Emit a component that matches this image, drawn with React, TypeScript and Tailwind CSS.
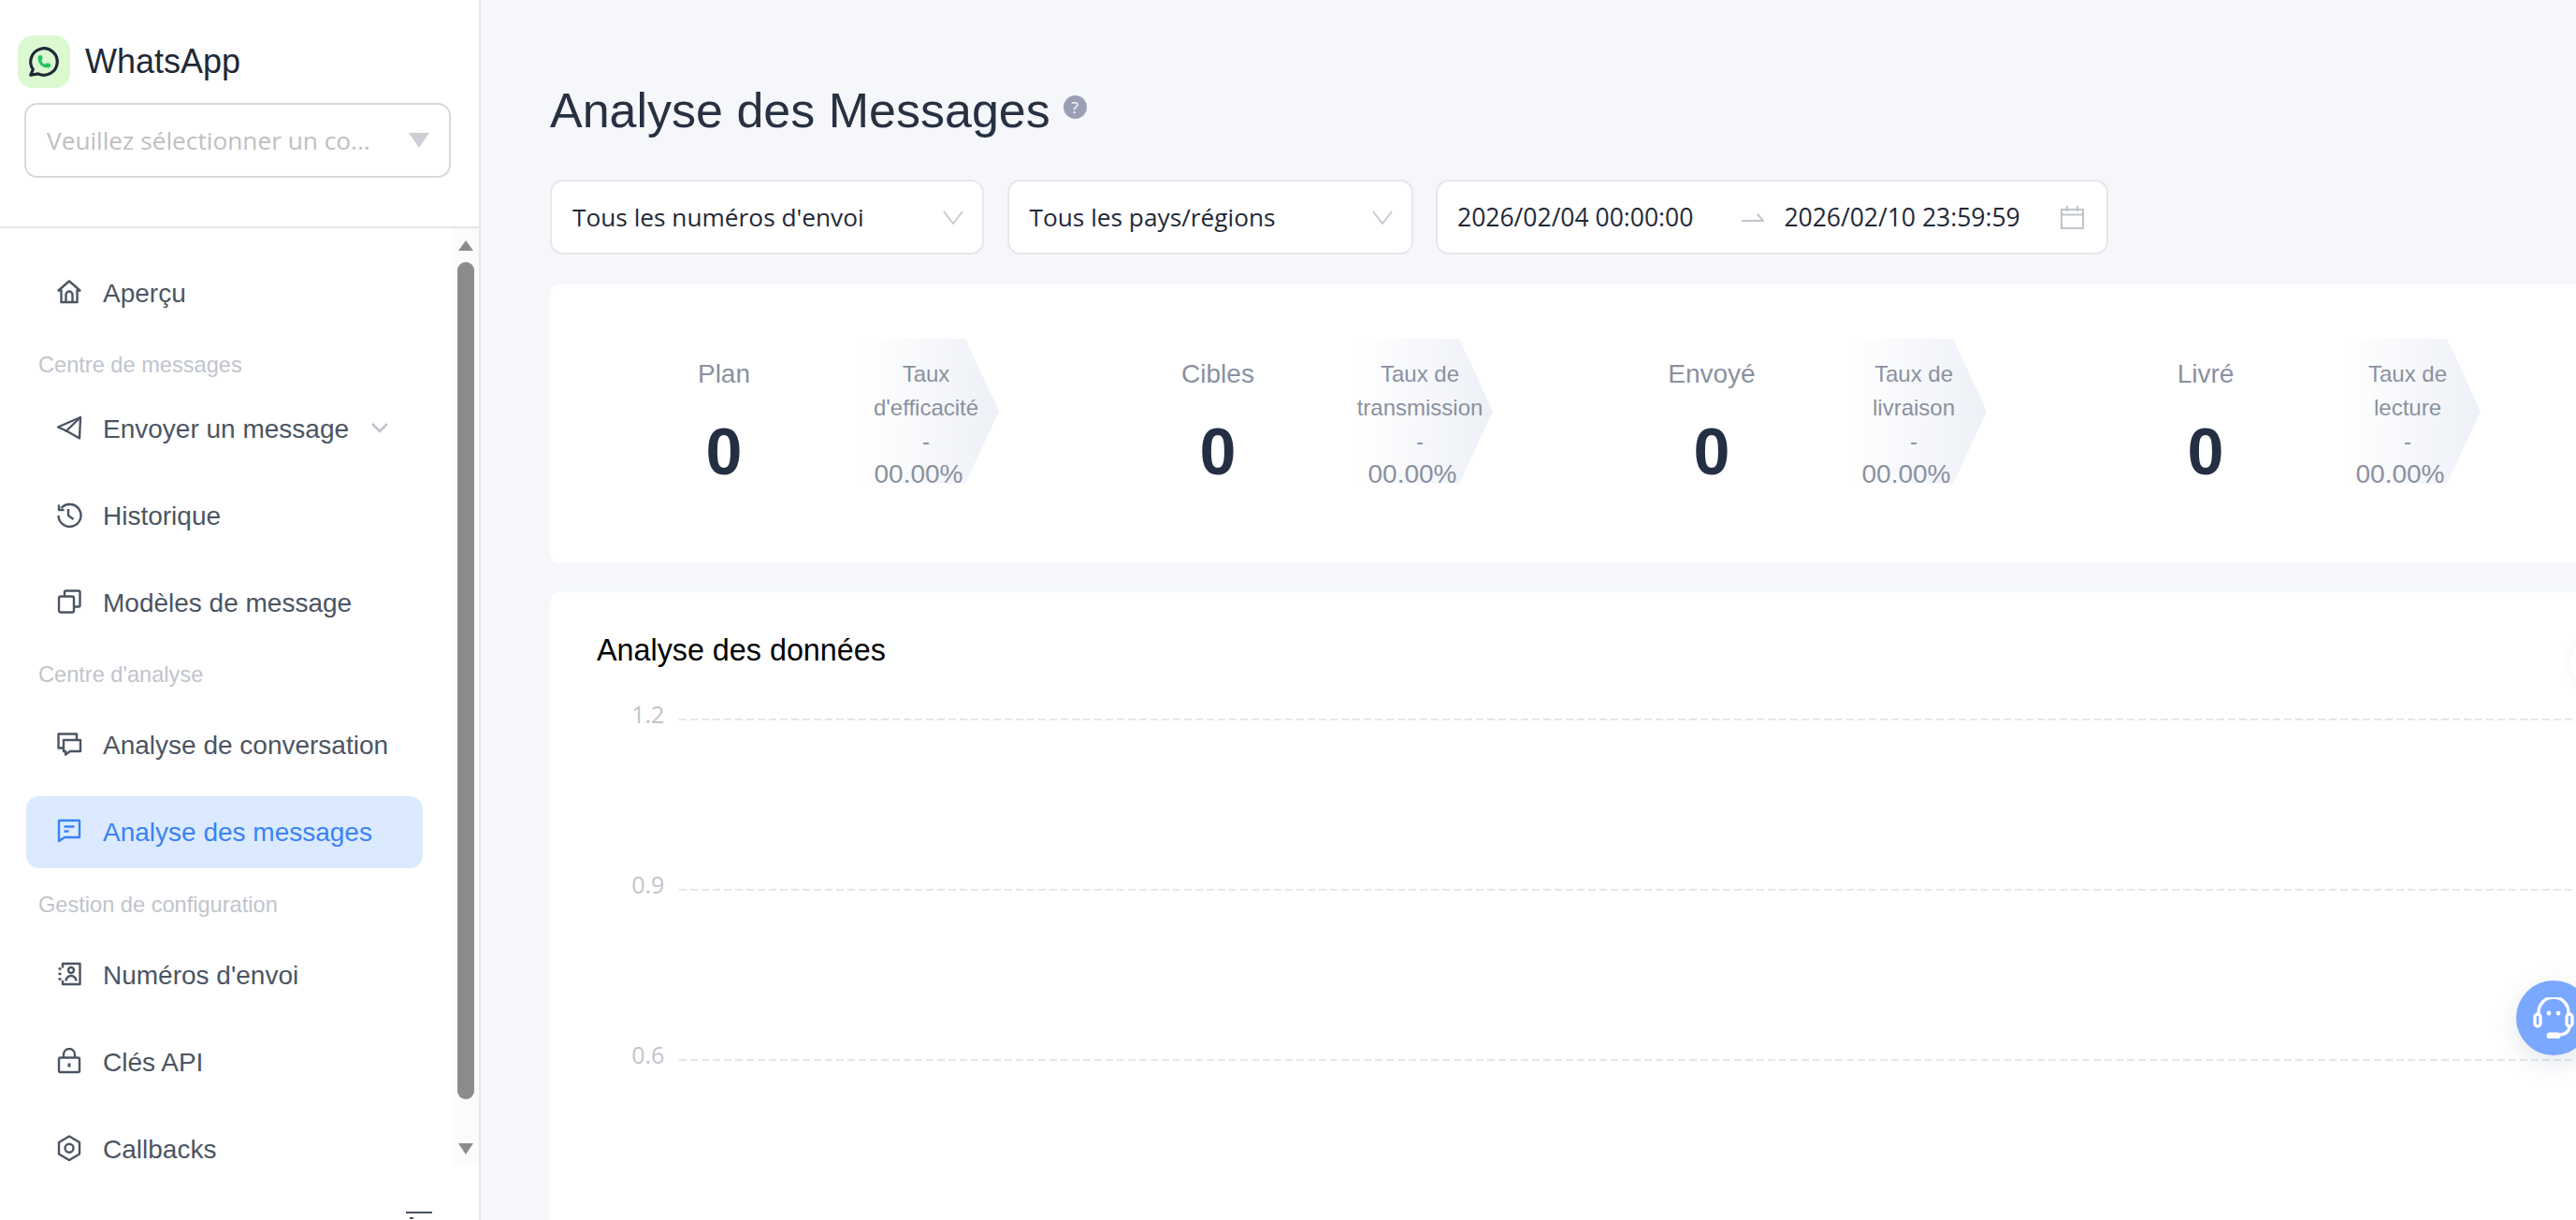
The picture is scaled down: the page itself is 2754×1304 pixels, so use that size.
import React from "react";

const sans = "font-['Liberation_Sans',Arial,sans-serif]";
const ui = "font-['Open_Sans','Noto_Sans',sans-serif]";

const icons: Record<string, React.ReactNode> = {
  home: (
    <>
      <path d="M14 2.5 2.5 12.5H5.5V25H22.5V12.5H25.5Z" />
      <path d="M10.5 25V17a3.5 3.5 0 0 1 7 0V25" />
    </>
  ),
  send: (
    <>
      <path d="M26 3 2 13.5l9 4L25 25.5Z" />
      <path d="M26 3 11 17.5V19" />
    </>
  ),
  history: (
    <>
      <path d="M5.5 7A12 12 0 1 1 2.5 15" />
      <path d="M3 3.5V9H8.5" />
      <path d="M13 8v7l5.5 4" />
    </>
  ),
  copy: (
    <>
      <rect x="3" y="8.5" width="16" height="17" rx="2" />
      <path d="M9 8.5V4a1.5 1.5 0 0 1 1.5-1.5H24A1.5 1.5 0 0 1 25.5 4V18a1.5 1.5 0 0 1-1.5 1.5H19" />
    </>
  ),
  chats: (
    <>
      <path d="M7.5 18.5H2.5V3.5H22V9.5" />
      <path d="M8 10h18v12H15l-5 3.5V22H8Z" />
    </>
  ),
  message: (
    <>
      <path d="M3 3h22v18H9l-6 4Z" />
      <path d="M8.5 9.5h11M8.5 14.5h5" />
    </>
  ),
  book: (
    <>
      <path d="M7 7.5V3h18.5v22H7v-4" />
      <path d="M2.5 8.5h3M2.5 14h3M2.5 19.5h3" />
      <circle cx="16" cy="10" r="3" />
      <path d="M10.5 21.5a5.5 5.5 0 0 1 11 0" />
    </>
  ),
  lock: (
    <>
      <rect x="3" y="10.5" width="22" height="15.5" rx="1.5" />
      <path d="M8 10.5V7a6 6 0 0 1 12 0v3.5" />
      <path d="M14 16.5v4" strokeWidth="3" />
    </>
  ),
  hexagon: (
    <>
      <path d="M14 1.5 25 8v12.5L14 27 3 20.5V8Z" />
      <circle cx="14" cy="14.2" r="4.5" />
    </>
  ),
};

const Icon = ({ name }: { name: string }) => (
  <svg viewBox="0 0 28 28" fill="none" stroke="currentColor" strokeWidth="2.4" strokeLinejoin="round" className="mb-[4px] h-[28px] w-[28px] shrink-0">
    {icons[name]}
  </svg>
);

const Item = ({ icon, label, active, chevron }: { icon: string; label: string; active?: boolean; chevron?: boolean }) => (
  <div className={`flex h-[77px] items-center rounded-[14px] pl-[32px] text-[28px] ${active ? "bg-[#dbeafe] text-[#3b82f6]" : "text-[#4b5563]"}`}>
    <Icon name={icon} />
    <span className="ml-[22px]">{label}</span>
    {chevron && (
      <svg viewBox="0 0 18 12" fill="none" stroke="#c0c4cc" strokeWidth="2.6" className="mb-[4px] ml-[24px] h-[12px] w-[18px]">
        <path d="M1 2l8 8 8-8" />
      </svg>
    )}
  </div>
);

const Section = ({ label, className }: { label: string; className: string }) => (
  <div className={`flex items-center pl-[13px] text-[23.6px] text-[#c0c4cc] ${className}`}>{label}</div>
);

const Chevron = () => (
  <svg viewBox="0 0 22 15" fill="none" stroke="#bfc3cb" strokeWidth="1.6" className="h-[15px] w-[22px]">
    <path d="M1 1l10 13L21 1" />
  </svg>
);

const Filter = ({ label, className }: { label: string; className: string }) => (
  <div className={`flex h-[80px] items-center justify-between rounded-[14px] border-2 border-[#e5e7eb] bg-white pl-[22px] pr-[20px] ${ui} text-[26.25px] text-[#1f2937] ${className}`}>
    <span className="mt-[2px]">{label}</span>
    <Chevron />
  </div>
);

const Stat = ({ label, rate }: { label: string; rate: string }) => (
  <div className="flex w-[528px] shrink-0">
    <div className="w-[236px] pt-[20px] text-center">
      <div className="text-[28px] leading-[36px] text-[#8a919f]">{label}</div>
      <div className="mt-[30px] text-[70px] font-bold leading-[70px] text-[#242f44]">0</div>
    </div>
    <div className="ml-[29px] h-[155px] w-[147px] bg-gradient-to-r from-white to-[#edf0f6] pt-[20px] text-[#8a919f] [clip-path:polygon(0_0,75.5%_0,100%_50%,75.5%_100%,0_100%)]">
      <div className="w-[138px] text-center text-[24px] leading-[36px]">
        {rate}
        <div className="text-[24px]">-</div>
        <div className="pr-[16px] text-[28px] leading-[34px]">00.00%</div>
      </div>
    </div>
  </div>
);

const GridRow = ({ value }: { value: string }) => (
  <div className="flex h-[2px] items-center">
    <span className={`mb-[10px] w-[123px] text-right ${ui} text-[25px] text-[#c0c4cc]`}>{value}</span>
    <svg className="ml-[16px] h-[2px] w-[2100px]">
      <line x1="0" y1="1" x2="2100" y2="1" stroke="#e5e7eb" strokeWidth="2" strokeDasharray="8 4" />
    </svg>
  </div>
);

const App = () => {
  return (
    <div className={`relative flex h-[1304px] w-[2754px] overflow-hidden bg-[#f5f7fb] ${sans}`}>
      <aside className="flex h-full w-[514px] shrink-0 flex-col border-r-2 border-[#e5e7eb] bg-white">
        <div className="h-[244px] shrink-0 border-b-2 border-[#e5e7eb] pl-[19px] pt-[38px]">
          <div className="flex items-center">
            <div className="flex h-[56px] w-[56px] items-center justify-center rounded-[16px] bg-[#dcf8d0]">
              <svg viewBox="0 0 24 24" fill="none" strokeLinecap="round" strokeLinejoin="round" className="h-[38px] w-[38px]">
                <path d="M3 21l1.65-3.8a9 9 0 1 1 3.4 2.9L3 21" stroke="#1f2937" strokeWidth="2" />
                <path d="M9 10a.5.5 0 0 0 1 0V9a.5.5 0 0 0-1 0v1a5 5 0 0 0 5 5h1a.5.5 0 0 0 0-1h-1a.5.5 0 0 0 0 1" stroke="#22c55e" strokeWidth="2" />
              </svg>
            </div>
            <span className="ml-[16px] text-[36px] text-[#1f2937]">WhatsApp</span>
          </div>
          <div className="ml-[7px] mt-[16px] flex h-[80px] w-[456px] items-center justify-between rounded-[14px] border-2 border-[#d9d9d9] pl-[22px] pr-[20px]">
            <span className={`mt-[2px] ${ui} text-[26.25px] text-[#bfbfbf]`}>Veuillez sélectionner un co...</span>
            <svg viewBox="0 0 24 18" className="h-[18px] w-[24px]">
              <path d="M1 1h22L12 17Z" fill="#ccced3" />
            </svg>
          </div>
        </div>
        <div className="flex h-[1002px] shrink-0 overflow-hidden">
          <nav className="w-[452px] shrink-0 pl-[28px] pt-[31px]">
            <Item icon="home" label="Aperçu" />
            <Section label="Centre de messages" className="h-[68px] pt-[10px]" />
            <Item icon="send" label="Envoyer un message" chevron />
            <div className="mt-[16px] flex flex-col gap-[16px]">
              <Item icon="history" label="Historique" />
              <Item icon="copy" label="Modèles de message" />
            </div>
            <Section label="Centre d'analyse" className="h-[75px] pt-[2px]" />
            <div className="flex flex-col gap-[16px]">
              <Item icon="chats" label="Analyse de conversation" />
              <Item icon="message" label="Analyse des messages" active />
            </div>
            <Section label="Gestion de configuration" className="h-[76px] pt-[3px]" />
            <div className="flex flex-col gap-[16px]">
              <Item icon="book" label="Numéros d'envoi" />
              <Item icon="lock" label="Clés API" />
              <Item icon="hexagon" label="Callbacks" />
            </div>
          </nav>
          <div className="ml-[32px] flex h-full w-[32px] shrink-0 flex-col items-center bg-[#fbfbfc] pr-[4px]">
            <svg viewBox="0 0 16 11" className="mt-[13px] h-[11px] w-[16px]">
              <path d="M8 0l8 11H0Z" fill="#8c8c8c" />
            </svg>
            <div className="mt-[12px] h-[895px] w-[18px] rounded-full bg-[#8c8c8c]" />
            <svg viewBox="0 0 16 12" className="mt-[47px] h-[12px] w-[16px]">
              <path d="M0 0h16L8 12Z" fill="#8c8c8c" />
            </svg>
          </div>
        </div>
        <div className="flex justify-end pr-[50px] pt-[49px]">
          <svg viewBox="0 0 28 9" className="h-[9px] w-[28px]">
            <path d="M0 1h28M4 7h4" stroke="#4b5563" strokeWidth="2" />
          </svg>
        </div>
      </aside>

      <main className="flex w-[2300px] shrink-0 flex-col pl-[74px]">
        <div className="flex h-[192px] shrink-0 items-start pt-[84px]">
          <h1 className="text-[52px] font-normal leading-[68px] text-[#273142]">Analyse des Messages</h1>
          <span className={`ml-[14px] mt-[18px] flex h-[25px] w-[25px] items-center justify-center rounded-full bg-[#9a9fb5] ${ui} text-[17px] text-white`}>?</span>
        </div>
        <div className="flex shrink-0 gap-[24.5px]">
          <Filter label="Tous les numéros d'envoi" className="w-[464px]" />
          <Filter label="Tous les pays/régions" className="w-[434px]" />
          <div className={`flex h-[80px] w-[719px] items-center rounded-[14px] border-2 border-[#e5e7eb] bg-white pl-[21px] ${ui} text-[26.5px] text-[#1f2937]`}>
            <span className="mt-[2px]">2026/02/04 00:00:00</span>
            <svg viewBox="0 0 24 10" fill="none" stroke="#c0c4cc" strokeWidth="2" className="ml-[52px] h-[10px] w-[24px]">
              <path d="M0 9h23L17 2" />
            </svg>
            <span className="ml-[21px] mt-[2px]">2026/02/10 23:59:59</span>
            <svg viewBox="0 0 25 25" fill="none" stroke="#c0c4cc" strokeWidth="2" className="ml-[43px] h-[25px] w-[25px]">
              <path d="M1 4h23v20H1ZM1 9.5h23M7 0v6M18 0v6" />
            </svg>
          </div>
        </div>
        <section className="mt-[32px] flex h-[298px] shrink-0 rounded-[10px] bg-white pl-[68px] pt-[58px]">
          <Stat label="Plan" rate="Taux d'efficacité" />
          <Stat label="Cibles" rate="Taux de transmission" />
          <Stat label="Envoyé" rate="Taux de livraison" />
          <Stat label="Livré" rate="Taux de lecture" />
        </section>
        <section className="mt-[31px] h-[800px] shrink-0 rounded-[10px] bg-white pt-[42px]">
          <h2 className="pl-[50px] text-[32.3px] font-normal leading-[40px] text-black">Analyse des données</h2>
          <div className="mt-[53px] flex flex-col gap-[180px]">
            <GridRow value="1.2" />
            <GridRow value="0.9" />
            <GridRow value="0.6" />
          </div>
        </section>
      </main>

      <div className="absolute right-[-54px] top-[678px] h-[60px] w-[60px] rounded-full bg-white shadow-[0_0_16px_rgba(0,0,0,0.06)]" />
      <div className="absolute right-[-16px] top-[1048px] flex h-[80px] w-[80px] items-center justify-center rounded-full bg-[#7aa7ff] shadow-[0_8px_28px_rgba(60,80,120,0.14)]">
        <svg viewBox="0 0 44 44" fill="none" stroke="white" strokeWidth="3.4" strokeLinecap="round" className="h-[44px] w-[44px]">
          <path d="M6 18v-2a16 16 0 0 1 32 0v2" />
          <rect x="2" y="18" width="6" height="13" rx="3" />
          <rect x="36" y="18" width="6" height="13" rx="3" />
          <path d="M39 31c0 5-4 9-11 9" />
          <path d="M18 41h8" strokeWidth="7" />
          <circle cx="17" cy="17" r="2.4" fill="white" stroke="none" />
          <circle cx="27" cy="17" r="2.4" fill="white" stroke="none" />
        </svg>
      </div>
    </div>
  );
};

export default App;
